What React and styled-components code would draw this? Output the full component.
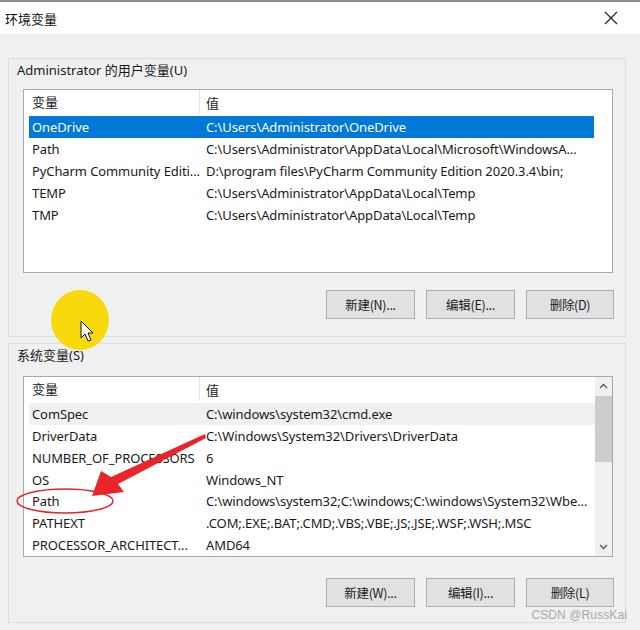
import React from "react";
import styled, { createGlobalStyle } from "styled-components";

const Global = createGlobalStyle`
  html, body { margin: 0; padding: 0; background: #f0f0f0; }
  body { font-family: "Noto Sans", "Noto Sans CJK SC", sans-serif; }
`;

const Window = styled.div`
  position: relative;
  width: 640px;
  height: 630px;
  background: #f0f0f0;
  overflow: hidden;
  font-size: 13px;
  color: #1a1a1a;
`;

const TitleBar = styled.div`
  height: 32px;
  border-top: 2px solid #8e8e8e;
  background: #fff;
  display: flex;
  align-items: center;
  justify-content: space-between;
  padding: 0 22px 0 5px;
`;

const Title = styled.div`
  font-family: "Noto Sans CJK SC", sans-serif;
  font-size: 13px;
  color: #111;
`;

const Body = styled.div`
  padding: 24px 14px 0 8px;
  display: flex;
  flex-direction: column;
  gap: 6px;
`;

const Group = styled.div`
  border: 1px solid #dedede;
  padding: 2px 12px ${(p) => p.$bottom}px 8px;
  display: flex;
  flex-direction: column;
`;

const GroupLabel = styled.div`
  height: 18px;
  line-height: 18px;
  margin-bottom: ${(p) => p.$gap}px;
  font-family: "Noto Sans", "Noto Sans CJK SC", sans-serif;
  font-size: 13px;
  color: #1a1a1a;
`;

const List = styled.div`
  margin-left: 6px;
  height: ${(p) => p.$h}px;
  box-sizing: border-box;
  border: 1px solid #a9a9a9;
  background: #fff;
  display: flex;
`;

const ListContent = styled.div`
  flex: 1;
  min-width: 0;
  padding: 0 ${(p) => (p.$scroll ? 0 : 18)}px 0 5px;
  display: flex;
  flex-direction: column;
`;

const Header = styled.div`
  height: 24px;
  display: flex;
  align-items: center;
  margin-bottom: 2px;
  font-family: "Noto Sans CJK SC", sans-serif;
  font-size: 13px;
  color: #222;
`;

const HeadName = styled.div`
  width: 167px;
  height: 24px;
  line-height: 24px;
  padding-left: 3px;
  border-right: 1px solid #e5e5e5;
`;

const HeadValue = styled.div`
  padding-left: 6px;
`;

const Row = styled.div`
  height: 22px;
  display: flex;
  align-items: center;
  background: ${(p) => (p.$sel ? "#0078d7" : p.$hover ? "#f0f0f0" : "transparent")};
  color: ${(p) => (p.$sel ? "#fff" : "#1a1a1a")};
  letter-spacing: -0.1px;
`;

const Cell = styled.div`
  padding-left: 3px;
  white-space: nowrap;
  ${(p) => (p.$name ? "width: 171px; flex: none;" : "flex: 1; min-width: 0;")}
`;

const Scrollbar = styled.div`
  width: 17px;
  background: #f0f0f0;
  display: flex;
  flex-direction: column;
  align-items: center;
`;

const ScrollArrow = styled.div`
  height: 18px;
  width: 17px;
  display: flex;
  align-items: center;
  justify-content: center;
  ${(p) => p.$down && "margin-top: auto;"}
`;

const Thumb = styled.div`
  margin-top: 1px;
  width: 17px;
  height: 66px;
  background: #cdcdcd;
`;

const ButtonRow = styled.div`
  margin-top: ${(p) => p.$top}px;
  display: flex;
  justify-content: flex-end;
  gap: 11px;
  margin-right: -1px;
`;

const Button = styled.button`
  width: ${(p) => p.$w || 89}px;
  height: 29px;
  background: #e1e1e1;
  border: 1px solid #adadad;
  font-family: "Noto Sans CJK SC", sans-serif;
  font-size: 12.5px;
  color: #1a1a1a;
  padding: 0;
  letter-spacing: -0.3px;
`;

const Watermark = styled.div`
  position: absolute;
  right: 13px;
  top: 608px;
  font-family: "Liberation Sans", Arial, sans-serif;
  font-size: 12px;
  color: #a9a9a9;
  letter-spacing: 0.1px;
`;

const Highlight = styled.div`
  position: absolute;
  left: 51px;
  top: 290px;
  width: 58px;
  height: 60px;
  border-radius: 50%;
  background: #f8da0c;
  filter: blur(0.6px);
`;

const Overlay = styled.svg`
  position: absolute;
  left: 0;
  top: 0;
  pointer-events: none;
`;

const Chevron = ({ down }) => (
  <svg width="9" height="6" viewBox="0 0 9 6">
    <path
      d={down ? "M1 1 L4.5 4.5 L8 1" : "M1 5 L4.5 1.5 L8 5"}
      fill="none"
      stroke="#555"
      strokeWidth="1.3"
    />
  </svg>
);

const userVars = [
  ["OneDrive", "C:\\Users\\Administrator\\OneDrive", true],
  ["Path", "C:\\Users\\Administrator\\AppData\\Local\\Microsoft\\WindowsA..."],
  ["PyCharm Community Editi...", "D:\\program files\\PyCharm Community Edition 2020.3.4\\bin;"],
  ["TEMP", "C:\\Users\\Administrator\\AppData\\Local\\Temp"],
  ["TMP", "C:\\Users\\Administrator\\AppData\\Local\\Temp"],
];

const sysVars = [
  ["ComSpec", "C:\\windows\\system32\\cmd.exe", false, true],
  ["DriverData", "C:\\Windows\\System32\\Drivers\\DriverData"],
  ["NUMBER_OF_PROCESSORS", "6"],
  ["OS", "Windows_NT"],
  ["Path", "C:\\windows\\system32;C:\\windows;C:\\windows\\System32\\Wbe..."],
  ["PATHEXT", ".COM;.EXE;.BAT;.CMD;.VBS;.VBE;.JS;.JSE;.WSF;.WSH;.MSC"],
  ["PROCESSOR_ARCHITECT...", "AMD64"],
];

function VarList({ rows, height, scroll }) {
  return (
    <List $h={height}>
      <ListContent $scroll={scroll}>
        <Header>
          <HeadName>变量</HeadName>
          <HeadValue>值</HeadValue>
        </Header>
        {rows.map(([n, v, sel, hover]) => (
          <Row key={n} $sel={sel} $hover={hover}>
            <Cell $name>{n}</Cell>
            <Cell>{v}</Cell>
          </Row>
        ))}
      </ListContent>
      {scroll && (
        <Scrollbar>
          <ScrollArrow>
            <Chevron />
          </ScrollArrow>
          <Thumb />
          <ScrollArrow $down>
            <Chevron down />
          </ScrollArrow>
        </Scrollbar>
      )}
    </List>
  );
}

export default function App() {
  return (
    <>
      <Global />
      <Window>
        <TitleBar>
          <Title>环境变量</Title>
          <svg width="14" height="14" viewBox="0 0 14 14">
            <path d="M1 1 L13 13 M13 1 L1 13" stroke="#222" strokeWidth="1.2" />
          </svg>
        </TitleBar>
        <Body>
          <Group $bottom={17}>
            <GroupLabel $gap={10}>Administrator 的用户变量(U)</GroupLabel>
            <VarList rows={userVars} height={184} />
            <ButtonRow $top={17}>
              <Button>新建(N)...</Button>
              <Button>编辑(E)...</Button>
              <Button $w={88}>删除(D)</Button>
            </ButtonRow>
          </Group>
          <Group $bottom={15}>
            <GroupLabel $gap={12}>系统变量(S)</GroupLabel>
            <VarList rows={sysVars} height={181} scroll />
            <ButtonRow $top={21}>
              <Button>新建(W)...</Button>
              <Button>编辑(I)...</Button>
              <Button $w={88}>删除(L)</Button>
            </ButtonRow>
          </Group>
        </Body>
        <Highlight />
        <Overlay width="640" height="630" viewBox="0 0 640 630">
          <path
            d="M81 321 L81 338 L85 334 L88 341 L91 340 L88 333 L93 333 Z"
            fill="#fff"
            stroke="#111"
            strokeWidth="1"
            strokeLinejoin="round"
          />
          <ellipse cx="65" cy="501" rx="48" ry="12" fill="none" stroke="#e0282c" strokeWidth="1.5" />
          <polygon
            points="92,496 101,471 111,477 205,434 206,438 118,484 124,492"
            fill="#e8262a"
          />
        </Overlay>
        <Watermark>CSDN @RussKai</Watermark>
      </Window>
    </>
  );
}
